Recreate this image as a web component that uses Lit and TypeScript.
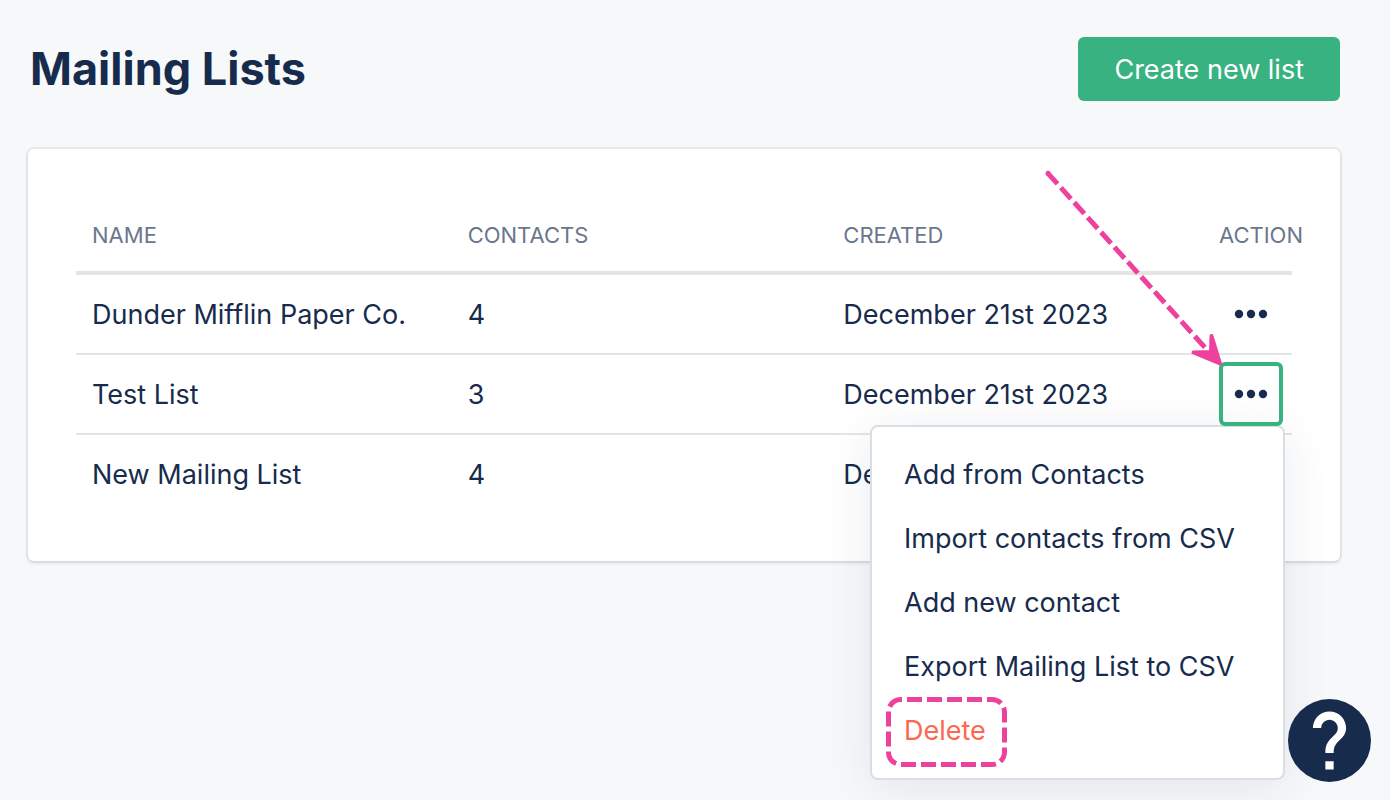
import { LitElement, html, css, nothing } from "lit";
import { customElement, property, state } from "lit/decorators.js";
import { classMap } from "lit/directives/class-map.js";

interface MailingList {
  name: string;
  contacts: number;
  created: string;
}

@customElement("row-actions")
class RowActions extends LitElement {
  @property({ type: Boolean }) open = false;
  @property() label = "";

  static styles = css`
    :host {
      display: block;
      position: relative;
      width: 64px;
    }
    button {
      font: inherit;
      color: inherit;
      background: none;
      border: 0;
      margin: 0;
      cursor: pointer;
    }
    .trigger {
      display: flex;
      align-items: center;
      justify-content: center;
      box-sizing: border-box;
      width: 64px;
      height: 64px;
      padding: 0;
      border: 4px solid transparent;
      border-radius: 6px;
      outline: none;
    }
    .trigger.open {
      position: relative;
      z-index: 3;
      border-color: #36b37e;
    }
    .menu {
      position: absolute;
      z-index: 2;
      top: 63px;
      right: -2px;
      margin: 0;
      padding: 16px 0 15px;
      width: 411px;
      list-style: none;
      background: #fff;
      border: 2px solid #d9dee4;
      border-radius: 8px;
      box-shadow: 0 8px 48px rgba(23, 43, 77, 0.09);
    }
    .item {
      display: block;
      width: 100%;
      height: 64px;
      padding: 0 32px;
      line-height: 64px;
      text-align: left;
      white-space: nowrap;
    }
    .last {
      position: relative;
    }
    .danger {
      color: #ff6650;
    }
    .outline {
      position: absolute;
      left: 14px;
      top: -2px;
      pointer-events: none;
    }
    .arrow {
      position: absolute;
      z-index: 4;
      right: 60px;
      bottom: 56px;
      pointer-events: none;
    }
  `;

  private toggle() {
    this.dispatchEvent(new CustomEvent("toggle-menu"));
  }

  private renderMenu() {
    const items = [
      "Add from Contacts",
      "Import contacts from CSV",
      "Add new contact",
      "Export Mailing List to CSV",
    ];
    return html`
      <ul class="menu">
        ${items.map((i) => html`<li><button class="item">${i}</button></li>`)}
        <li class="last">
          <button class="item danger">Delete</button>
          <svg class="outline" width="121" height="70" viewBox="0 0 121 70" fill="none" aria-hidden="true">
            <rect x="2.5" y="2.5" width="116" height="65" rx="12.5" pathLength="340"
              stroke="#ed419d" stroke-width="5" stroke-dasharray="15 5" stroke-dashoffset="-6" />
          </svg>
        </li>
      </ul>
      <svg class="arrow" width="180" height="200" viewBox="0 0 180 200" fill="none" aria-hidden="true">
        <path d="M4.500 2.800L163.300 179" stroke="#ed419d" stroke-width="5" stroke-dasharray="15 5" />
        <circle cx="5" cy="3.200" r="2.500" fill="#ed419d" />
        <path d="M177 193.500L168.500 166L168 182L150.500 182.500Z" fill="#ed419d" stroke="#ed419d"
          stroke-width="4" stroke-linejoin="round" />
      </svg>
    `;
  }

  render() {
    return html`
      <button
        class=${classMap({ trigger: true, open: this.open })}
        aria-label=${this.label}
        aria-expanded=${this.open}
        @click=${this.toggle}
      >
        <svg width="34" height="10" viewBox="0 0 34 10" fill="currentColor" aria-hidden="true">
          <circle cx="5" cy="5" r="4.200" />
          <circle cx="17" cy="5" r="4.200" />
          <circle cx="29" cy="5" r="4.200" />
        </svg>
      </button>
      ${this.open ? this.renderMenu() : nothing}
    `;
  }
}

@customElement("app-root")
class AppRoot extends LitElement {
  @state() private openIndex = 1;

  private lists: MailingList[] = [
    { name: "Dunder Mifflin Paper Co.", contacts: 4, created: "December 21st 2023" },
    { name: "Test List", contacts: 3, created: "December 21st 2023" },
    { name: "New Mailing List", contacts: 4, created: "December 21st 2023" },
  ];

  static styles = css`
    :host {
      display: block;
      box-sizing: border-box;
      min-height: 100vh;
      padding: 37px 50px 48px 28px;
      background: #f7f8fa;
      color: #172b4d;
      font: 400 27px/36px Inter, "Liberation Sans", sans-serif;
    }
    header {
      display: flex;
      align-items: center;
      justify-content: space-between;
      margin-bottom: 48px;
    }
    h1 {
      margin: 0;
      padding-left: 2px;
      font-size: 45px;
      line-height: 64px;
      font-weight: 700;
    }
    .create {
      height: 64px;
      padding: 2px 36px 0;
      border: 0;
      border-radius: 6px;
      background: #38b281;
      color: #fff;
      font: inherit;
      cursor: pointer;
    }
    .card {
      padding: 48px;
      background: #fff;
      border-radius: 6px;
      box-shadow: 0 0 0 2px rgba(0, 0, 0, 0.05), 0 2px 4px rgba(0, 0, 0, 0.1);
    }
    table {
      width: 100%;
      table-layout: fixed;
      border-collapse: separate;
      border-spacing: 0;
    }
    .action-col {
      width: 89px;
    }
    th,
    td {
      box-sizing: border-box;
      height: 80px;
      padding: 2px 0 0 16px;
      text-align: left;
      vertical-align: middle;
      white-space: nowrap;
      border-bottom: 2px solid #e4e4e4;
    }
    th {
      height: 78px;
      color: #6b778c;
      font-size: 22px;
      font-weight: 400;
      border-bottom: 4px solid #e4e4e4;
    }
    .action-cell {
      padding-top: 0;
    }
    tbody tr:last-child td {
      height: 78px;
      border-bottom: 0;
    }
    .help {
      position: fixed;
      right: 19px;
      bottom: 18px;
      z-index: 5;
      padding: 0;
      border: 0;
      border-radius: 50%;
      background: none;
      color: #172b4d;
      cursor: pointer;
    }
    .help svg {
      display: block;
    }
  `;

  render() {
    return html`
      <header>
        <h1>Mailing Lists</h1>
        <button class="create">Create new list</button>
      </header>
      <main class="card">
        <table>
          <colgroup>
            <col />
            <col />
            <col />
            <col class="action-col" />
          </colgroup>
          <thead>
            <tr>
              <th scope="col">NAME</th>
              <th scope="col">CONTACTS</th>
              <th scope="col">CREATED</th>
              <th scope="col">ACTION</th>
            </tr>
          </thead>
          <tbody>
            ${this.lists.map(
              (list, i) => html`
                <tr>
                  <td>${list.name}</td>
                  <td>${list.contacts}</td>
                  <td>${list.created}</td>
                  <td class="action-cell">
                    <row-actions
                      .open=${this.openIndex === i}
                      .label=${`Actions for ${list.name}`}
                      @toggle-menu=${() => (this.openIndex = this.openIndex === i ? -1 : i)}
                    ></row-actions>
                  </td>
                </tr>
              `
            )}
          </tbody>
        </table>
      </main>
      <button class="help" aria-label="Help">
        <svg width="83" height="83" viewBox="2 2 20 20" aria-hidden="true">
          <circle cx="12" cy="12" r="10" fill="currentColor" />
          <path
            fill="#fff"
            d="M13 19h-2v-2h2v2zm2.070-7.750l-.9.920C13.450 12.900 13 13.500 13 15h-2v-.5c0-1.100.450-2.100 1.170-2.830l1.240-1.260c.370-.360.590-.860.590-1.410 0-1.100-.9-2-2-2s-2 .9-2 2H8c0-2.210 1.790-4 4-4s4 1.790 4 4c0 .880-.360 1.680-.930 2.250z"
          />
        </svg>
      </button>
    `;
  }
}
